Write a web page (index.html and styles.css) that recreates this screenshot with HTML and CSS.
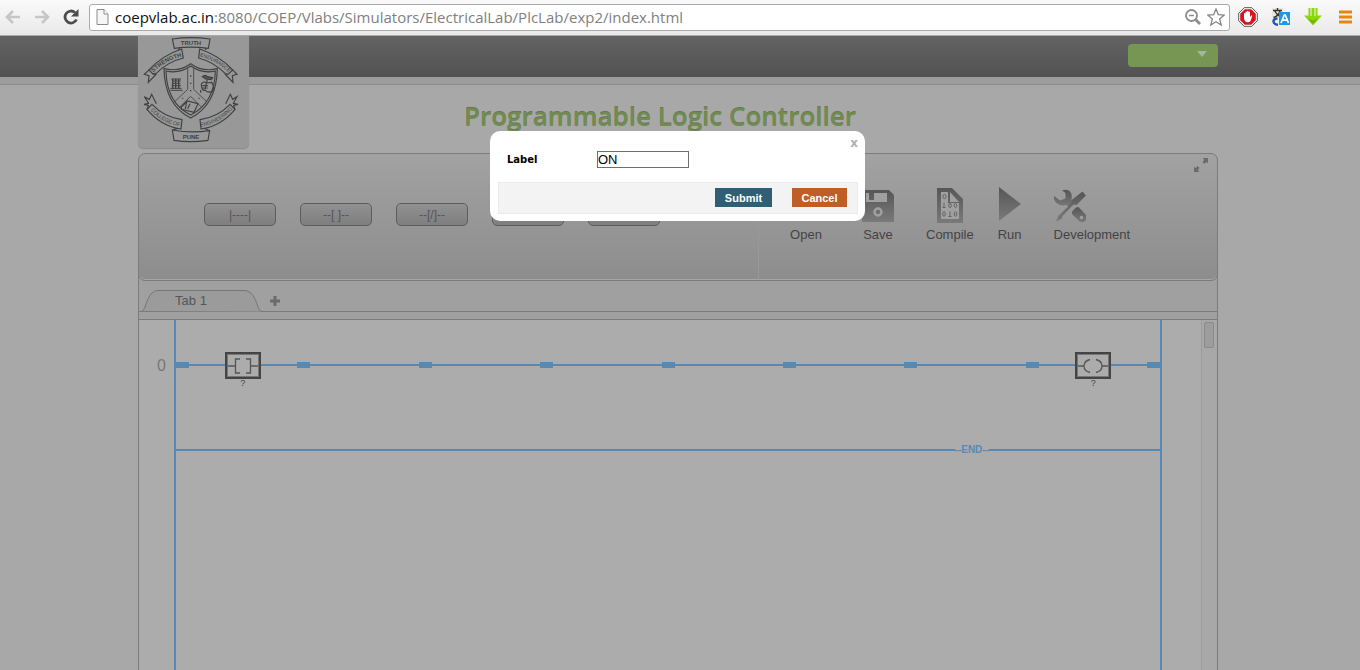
FILE: index.html
```html
<!DOCTYPE html>
<html lang="en">
<head>
<meta charset="utf-8">
<title>Programmable Logic Controller</title>
<link rel="stylesheet" href="styles.css">
</head>
<body>
<div class="browser-bar">
  <button class="nav-btn" aria-label="Back"><svg width="16" height="14" viewBox="0 0 16 14"><path d="M8 1L2 7l6 6M2.500 7H15" fill="none" stroke="#c6c6c6" stroke-width="2.600"/></svg></button>
  <button class="nav-btn" aria-label="Forward"><svg width="16" height="14" viewBox="0 0 16 14"><path d="M8 1l6 6-6 6M13.500 7H1" fill="none" stroke="#c6c6c6" stroke-width="2.600"/></svg></button>
  <button class="nav-btn" aria-label="Reload"><svg width="16" height="16" viewBox="0 0 16 16"><path d="M13.500 10.500A6 6 0 1 1 12 3.500" fill="none" stroke="#4c4c4c" stroke-width="2.800"/><path d="M15.500 0v7.500H8z" fill="#4c4c4c"/></svg></button>
  <div class="address">
    <svg width="13" height="16" viewBox="0 0 13 16"><path d="M1 .5h7l4 4.500v10.500H1z" fill="#f6f6f6" stroke="#8b8b8b"/><path d="M8 .5V5h4" fill="#fff" stroke="#8b8b8b"/></svg>
    <div class="url" role="textbox" aria-label="Address" contenteditable="true" spellcheck="false"><span class="host">coepvlab.ac.in</span>:8080/COEP/Vlabs/Simulators/ElectricalLab/PlcLab/exp2/index.html</div>
    <button class="nav-btn" aria-label="Zoom"><svg width="16" height="16" viewBox="0 0 16 16"><circle cx="6.500" cy="6.500" r="5.500" fill="none" stroke="#8c8c8c" stroke-width="1.800"/><path d="M4 6.500h5" stroke="#8c8c8c" stroke-width="1.500"/><path d="M10.500 10.500l4.500 4.500" stroke="#8c8c8c" stroke-width="2.800"/></svg></button>
    <button class="nav-btn" aria-label="Bookmark"><svg width="18" height="18" viewBox="0 0 18 18"><path d="M9 1l2.300 5.600 6 .5-4.600 3.900 1.500 6L9 13.700 3.800 17l1.500-6L.7 7.100l6-.5z" fill="#fff" stroke="#858585" stroke-width="1.300"/></svg></button>
  </div>
  <div class="extensions">
    <button class="nav-btn" aria-label="Ad blocker"><svg width="20" height="20" viewBox="0 0 20 20"><path d="M6.200.7h7.600l5.500 5.500v7.600l-5.500 5.500H6.200L.7 13.800V6.200z" fill="#fff" stroke="#555"/><path d="M6.800 2.200h6.400l4.600 4.600v6.400l-4.600 4.600H6.800l-4.600-4.600V6.800z" fill="#d8141c"/><path d="M6 11V6.500q.8-1 1.400 0V5q.8-1 1.500 0v-.7q.9-1 1.600 0V5q.9-.8 1.500.1V10l1.300-1.600q1.200-.2.900.9L12.500 14q-1 1.400-2.800 1.300Q6.300 15 6 11z" fill="#fff"/></svg></button>
    <button class="nav-btn" aria-label="Translate"><svg width="20" height="20" viewBox="0 0 20 20"><path d="M1 1h11v10H1z" fill="#ece7d6"/><path d="M2 3.500h9M6.500 1v2.500M9 4Q7.500 9 2.500 10.500M4 4q2 4.500 6 6" fill="none" stroke="#333" stroke-width="1.400"/><path d="M6.500 11.500Q1 12 3 16q1 1.800 4 1.800" fill="none" stroke="#1458b8" stroke-width="2.500"/><path d="M8 5h11v13H8z" fill="#2196e3"/><path d="M10 16l3.300-8h1L17.500 16M11.200 13.200h5" fill="none" stroke="#fff" stroke-width="1.700"/></svg></button>
    <button class="nav-btn" aria-label="Downloader"><svg width="18" height="18" viewBox="0 0 18 18"><path d="M4.500 0h2v8h1V0h3v8h1V0h2v7.500H18L9 17.500 0 7.500h4.500z" fill="#8ed60c"/><path d="M4 10.500L9 16l5-5.500-5 2z" fill="#6fb505"/></svg></button>
    <button class="nav-btn menu-btn" aria-label="Menu"><svg width="13" height="14" viewBox="0 0 13 14"><path d="M0 2h13M0 7h13M0 12h13" stroke="#e8850c" stroke-width="3"/></svg></button>
  </div>
</div>

<main class="site">
  <header class="site-header">
    <div class="wrap header-row">
      <a class="logo" href="#" aria-label="College of Engineering Pune">
        <svg viewBox="24 0 333 336" fill="none" stroke="#414141" stroke-width="3.500">
          <path d="M127 9Q182 1 240 9l-5 28Q182 30 133 37z"/>
          <path d="M148 36l-2 6M226 36l2 6"/>
          <path id="ribbon" d="M155 39Q95 59 57 102l13 13 8-2Q111 78 160 66z"/>
          <path d="M58 101L43 115l14 4-2 20 24-25M70 115l4-4"/>
          <path d="M209 39Q269 59 308 102l-14 13-8-2Q252 78 206 66z"/>
          <path d="M307 101l14 14-14 4 2 20-24-25"/>
          <path d="M66 205Q102 243 156 251l-3 28Q92 270 51 220z"/>
          <path d="M51 221l4-13-13-3 14-3-13-20 15 8 7-15 14 28"/>
          <path d="M300 205Q264 243 210 251l3 28Q274 270 315 220z"/>
          <path d="M315 221l-4-13 13-3-14-3 11-20-13 8-7-15-14 28"/>
          <path d="M141 278l-14 4 5 31Q182 321 234 313l5-29-13-5M127 282q55 10 112 2"/>
          <path d="M182 83q-36 26-80 15 2 108 80 148 78-40 80-148-44 11-80-15z"/>
          <path d="M182 90q-34 24-74 15 2 96 74 132 72-36 74-132-40 9-74-15z"/>
          <path d="M173 98v62l-40 38M191 98v62l40 38M182 181l-33 32M182 181l32 32" stroke-width="2.500"/>
          <g stroke-width="3"><path d="M124 129h29M126 135h26M127 142h24M125 149h28M121 157h34M121 163h37"/><path d="M128 129v30M137 129v30M146 129v30" stroke-width="4"/></g>
          <path d="M217 122q8-8 16 0l15 3-4 6-17-2z" fill="#555"/>
          <path d="M232 130l-7 30M214 144q7-10 15-3l16-2q11 16 2 27-12 6-21-3-12 2-12-19zM216 156h17M217 149h17M212 162v8"/>
          <path d="M154 213l18-18 32 8-12 26-37-9zM170 198l-4 21M180 203l-7 15"/>
          <path d="M182 118v4M182 140v4M182 162v4M157 186l2 2M208 186l-2 2" stroke-width="4"/>
          <defs>
            <path id="ribbon-left" d="M69 111Q105 74 157 61"/><path id="ribbon-right" d="M207 60Q258 73 298 111"/>
            <path id="ribbon-low-left" d="M58 219Q96 262 154 272"/><path id="ribbon-low-right" d="M212 272Q270 262 308 219"/>
          </defs>
          <g class="motto">
            <text x="183" y="27" text-anchor="middle">TRUTH</text>
            <text x="183" y="308" text-anchor="middle">PUNE</text>
            <text><textPath href="#ribbon-left" startOffset="50%" text-anchor="middle">STRENGTH</textPath></text>
            <text class="motto-long"><textPath href="#ribbon-right" startOffset="50%" text-anchor="middle">ENDURANCE</textPath></text>
            <text class="motto-long"><textPath href="#ribbon-low-left" startOffset="50%" text-anchor="middle">COLLEGE OF</textPath></text>
            <text class="motto-long"><textPath href="#ribbon-low-right" startOffset="50%" text-anchor="middle">ENGINEERING</textPath></text>
          </g>
        </svg>
      </a>
      <button class="user-menu" aria-label="Account"><svg width="10" height="6" viewBox="0 0 10 6"><path d="M0 0h10L5 6z" fill="#a6b497"/></svg></button>
    </div>
  </header>

  <div class="wrap">
    <h1 class="title">Programmable Logic Controller</h1>
    <section class="workbench">
      <div class="toolbar">
        <div class="parts">
          <button class="part">|----|</button>
          <button class="part">--[ ]--</button>
          <button class="part">--[/]--</button>
          <button class="part" aria-label="Coil"></button>
          <button class="part" aria-label="Negated coil"></button>
        </div>
        <div class="actions">
          <button class="action action-open"><svg width="32" height="36" viewBox="0 0 32 36"><path d="M0 6h12l3 4h14v20H0z" fill="#606060"/></svg>Open</button>
          <button class="action action-save"><svg width="32" height="36" viewBox="0 0 32 36"><path d="M0 3h27l5 5v27H0z" fill="url(#metal)"/><path d="M4 6h3v7h5V6h13v9H4z" fill="#a0a0a0"/><circle cx="16" cy="25" r="3.500" fill="none" stroke="#a0a0a0" stroke-width="2.500"/></svg>Save</button>
          <button class="action action-compile"><svg width="26" height="36" viewBox="0 0 26 36"><path d="M0 1h15l11 11v24H0z" fill="url(#metal)"/><path d="M4 5h7v11h11v16H4z" fill="#a0a0a0"/><path d="M13 5v10h9z" fill="#a0a0a0"/><g fill="none" stroke="#646464"><ellipse cx="7.500" cy="9.500" rx="1.500" ry="2.200"/><path d="M7 15.500v5M5.500 20.500h3M13 24.500v5M11.500 29.500h3"/><ellipse cx="13" cy="18.500" rx="1.300" ry="2"/><ellipse cx="18.500" cy="18.500" rx="1.300" ry="2"/><ellipse cx="7" cy="27" rx="1.300" ry="2.200"/><ellipse cx="18.500" cy="27" rx="1.300" ry="2.200"/></g></svg>Compile</button>
          <button class="action action-run"><svg width="22" height="36" viewBox="0 0 22 36"><path d="M0 0l22 17L0 34z" fill="url(#metal)"/></svg>Run</button>
          <button class="action action-dev"><svg width="32" height="36" viewBox="0 0 32 36"><path d="M8 3.500Q15 1 17.500 7q1 4-.5 7l2 2-4 4.500-2.500-2.500Q3 20 0 12V9l6 4.500 5.500-2V6z" fill="url(#metal)"/><path d="M22 20.500l2.500-.5 7.500 8v5l-2 2h-4l-8-8v-2.500z" fill="url(#metal)"/><path d="M28.500 4.500l3.500 4-9.500 9.500-3-.5L8.500 29 7.500 32 2 34.500l2.500-6 2-1.500L17.500 16l-.5-2.500z" fill="url(#metal)"/><circle cx="27.500" cy="30.500" r="1.700" fill="#a0a0a0"/></svg>Development</button>
        </div>
        <button class="expand" aria-label="Full screen"><svg width="14" height="14" viewBox="0 0 14 14"><path d="M8.500 0H14v5.500l-1.700-1.700L10.500 6l-2-2 1.800-2.200zM0 8.500L1.700 10.200 3.500 8l2 2-1.800 2.200L5.500 14H0z" fill="#6a6a6a"/></svg></button>
      </div>
      <div class="tabs">
        <button class="tab"><svg class="tab-shape" width="120" height="22" viewBox="0 0 120 22"><path d="M0 21Q2 20 3 17C6 8 9 .5 16 .5h86c8 0 11 7.500 14 16.500q1 4 4 4.500" fill="#9b9b9b" stroke="#767676"/></svg><span>Tab 1</span></button>
        <button class="add-tab" aria-label="Add tab"><svg width="10" height="10" viewBox="0 0 10 10"><path d="M5 0v10M0 5h10" stroke="#6b6b6b" stroke-width="3"/></svg></button>
      </div>
      <div class="gap-strip"></div>
      <div class="editor">
        <div class="gutter">0</div>
        <div class="ladder">
          <div class="rung">
            <div class="nubs"><i></i><i></i><i></i><i></i><i></i><i></i><i></i><i></i><i></i></div>
            <div class="cells">
              <div class="device"><svg width="30" height="21" viewBox="0 0 30 21"><path d="M0 11h7M23 11h7M12 4H7.500v14H12M18 4h4.500v14H18" fill="none" stroke="#555" stroke-width="1.300"/></svg><span class="device-label">?</span></div>
              <div class="device device-last"><svg width="30" height="21" viewBox="0 0 30 21"><path d="M0 11h6M24 11h6M12 4.500Q6 6 6 11t6 6.500M18 4.500Q24 6 24 11t-6 6.500" fill="none" stroke="#555" stroke-width="1.300"/></svg><span class="device-label">?</span></div>
            </div>
          </div>
          <div class="end-rung"><span>--END--</span></div>
        </div>
        <div class="scrollbar"><div class="thumb"></div></div>
      </div>
    </section>
  </div>
</main>

<form class="dialog" role="dialog" aria-label="Label">
  <button type="button" class="close" aria-label="Close">x</button>
  <div class="field"><label for="part-label">Label</label><input id="part-label" type="text" value="ON"></div>
  <div class="dialog-actions">
    <button type="submit" class="btn submit">Submit</button>
    <button type="button" class="btn cancel">Cancel</button>
  </div>
</form>

<svg class="defs" width="0" height="0" aria-hidden="true"><linearGradient id="metal" x1="0" y1="0" x2="0" y2="1"><stop offset="0" stop-color="#565656"/><stop offset="1" stop-color="#7a7a7a"/></linearGradient></svg>
</body>
</html>
```

FILE: styles.css
```css
* { box-sizing: border-box; }
body {
  margin: 0;
  height: 100vh;
  display: flex;
  flex-direction: column;
  overflow: hidden;
  position: relative;
  font-family: "Liberation Sans", Arial, sans-serif;
  font-size: 13px;
  color: #434347;
}
button { font: inherit; color: inherit; border: 0; padding: 0; background: none; }
svg { display: block; flex: none; }
.defs { position: absolute; }

.browser-bar {
  flex: none;
  height: 36px;
  display: flex;
  align-items: center;
  gap: 13px;
  padding: 0 8px 1px 5px;
  background: linear-gradient(#fafafa, #e9e9e9);
  border-bottom: 1px solid #a9a9a9;
}
.address {
  flex: 1;
  height: 27px;
  display: flex;
  align-items: center;
  gap: 6px;
  margin-left: -3px;
  padding: 0 4px 0 6px;
  background: #fff;
  border: 1px solid #a9a9a9;
  border-radius: 3px;
}
.url {
  flex: 1;
  font-family: "Open Sans", "Noto Sans", sans-serif;
  font-size: 15px;
  line-height: 22px;
  white-space: nowrap;
  color: #808080;
}
.host { color: #111; }
.extensions { display: flex; align-items: center; gap: 13px; margin-left: -5px; }
.menu-btn { margin-left: 4px; }

.site { flex: 1; min-height: 0; display: flex; flex-direction: column; background: #a8a8a8; }
.wrap { width: calc(100% - 280px); max-width: 1080px; margin: 0 auto; position: relative; right: 2px; }
.site > .wrap { flex: 1; min-height: 0; display: flex; flex-direction: column; }
.site-header {
  flex: none;
  height: 50px;
  background: linear-gradient(#636363, #525252 41px, #9d9d9d 41px, #9d9d9d 48px, #8b8b8b 48px, #8b8b8b 49px, #a8a8a8 49px);
}
.header-row { display: flex; justify-content: space-between; align-items: flex-start; }
.logo {
  z-index: 1;
  width: 111px;
  height: 112px;
  background: #989898;
  border-radius: 0 0 5px 5px;
  box-shadow: 0 1px 1px #888;
}
.logo svg { width: 100%; height: 100%; }
.motto { fill: #414141; stroke: none; font-size: 18px; font-weight: bold; }
.motto-long { font-size: 16px; font-weight: normal; }
.user-menu {
  width: 90px;
  height: 23px;
  margin-top: 8px;
  padding: 0 11px 4px;
  display: flex;
  align-items: center;
  justify-content: flex-end;
  border-radius: 4px;
  background: #789653;
}

.title {
  margin: 0;
  height: 67px;
  padding-top: 12px;
  text-align: center;
  text-indent: -36px;
  font: 600 26px/36px "Open Sans", "Noto Sans", sans-serif;
  color: #708c50;
  text-shadow: 0 -1px 0 #697557;
}
.workbench {
  flex: 1;
  min-height: 0;
  display: flex;
  flex-direction: column;
  border: 1px solid #7b7b7b;
  border-top: 0;
  border-bottom: 0;
  border-radius: 10px 10px 0 0;
  background: #a0a0a0;
}
.toolbar {
  flex: none;
  height: 128px;
  display: flex;
  margin: 0 -1px;
  position: relative;
  border: 1px solid #7b7b7b;
  border-radius: 7px;
  background: linear-gradient(#a2a2a2, #8d8d8d);
  box-shadow: inset 0 -1px #a6a6a6;
}
.parts { width: 619px; display: flex; align-items: flex-start; gap: 24px; padding: 49px 0 0 65px; }
.part {
  width: 72px;
  height: 23px;
  border: 1px solid #5d5d5d;
  border-radius: 5px;
  background: linear-gradient(#919191, #7e7e7e);
  font-size: 12px;
  color: #555;
}
.actions { flex: 1; display: flex; align-items: flex-start; gap: 24px; padding: 33px 0 0 31px; border-left: 1px solid #999; }
.action { display: flex; flex-direction: column; align-items: center; gap: 4px; line-height: 16px; }
.action-save { margin-left: 16px; }
.action-compile { margin-left: 8px; }
.action-dev { align-items: flex-start; margin-left: 8px; }
.expand { position: absolute; top: 4px; right: 9px; }

.tabs { flex: none; height: 31px; display: flex; align-items: flex-end; padding-left: 3px; gap: 8px; border-bottom: 1px solid #7b7b7b; }
.tab { display: grid; margin-bottom: -1px; color: #55555a; }
.tab > * { grid-area: 1 / 1; }
.tab span { padding-right: 22px; line-height: 22px; }
.add-tab { padding-bottom: 5px; }
.gap-strip { flex: none; height: 8px; border-bottom: 1px solid #7b7b7b; }

.editor { flex: 1; min-height: 0; display: flex; background: #acacac; }
.gutter { width: 35px; padding: 35px 8px 0 0; text-align: right; font-size: 16px; line-height: 22px; color: #777; }
.ladder { flex: 1; border: solid #5689b4; border-width: 0 2px; }
.rung { height: 90px; display: grid; align-items: center; background: linear-gradient(#5689b4, #5689b4) 0 44px / 100% 2px no-repeat; }
.rung > * { grid-area: 1 / 1; }
.nubs { display: flex; justify-content: space-between; }
.nubs i { width: 13px; height: 6px; background: #5689b4; }
.cells { display: grid; grid-template-columns: repeat(8, 1fr); padding: 0 6px; justify-items: center; }
.device { position: relative; padding: 1px; border: 2px solid #444; background: #acacac; box-shadow: inset 0 0 0 1px #777; }
.device-last { grid-column: 8; }
.device-label { position: absolute; top: 100%; left: 0; right: 0; text-align: center; font-size: 9px; line-height: 12px; }
.end-rung {
  height: 80px;
  display: flex;
  align-items: center;
  justify-content: flex-end;
  padding-right: 171px;
  background: linear-gradient(#5689b4, #5689b4) 0 39px / 100% 2px no-repeat;
  font-size: 10px;
  font-weight: bold;
  color: #5689b4;
}
.end-rung span { background: #acacac; line-height: 8px; }
.scrollbar { width: 16px; margin-left: 39px; padding: 2px; border-left: 1px solid #9c9c9c; background: #a8a8a8; }
.thumb { height: 26px; width: 10px; border: 1px solid #8a8a8a; border-radius: 2px; background: #9d9d9d; }

.dialog {
  position: absolute;
  top: 131px;
  left: calc(50% - 190px);
  width: 375px;
  padding: 20px 7px 7px 8px;
  border-radius: 10px;
  background: #fff;
}
.close { position: absolute; top: 4px; right: 7px; font: bold 12px/16px "DejaVu Sans", sans-serif; color: #b0b0b0; }
.field { display: flex; align-items: center; padding-left: 9px; }
.field label { width: 90px; font: bold 10px/17px "DejaVu Sans", Verdana, sans-serif; color: #000; }
.field input {
  width: 92px;
  height: 17px;
  padding: 0;
  border: 1px solid #6e6e6e;
  font: 13px "Liberation Sans", Arial, sans-serif;
  color: #000;
}
.dialog-actions {
  display: flex;
  justify-content: flex-end;
  gap: 20px;
  margin-top: 14px;
  padding: 5px 10px 6px;
  background: #f3f3f3;
  border: 1px solid #ebebeb;
}
.btn { height: 19px; font-weight: bold; font-size: 11px; color: #fff; }
.submit { width: 57px; background: #2e5f74; }
.cancel { width: 55px; background: #c05e27; }
```
